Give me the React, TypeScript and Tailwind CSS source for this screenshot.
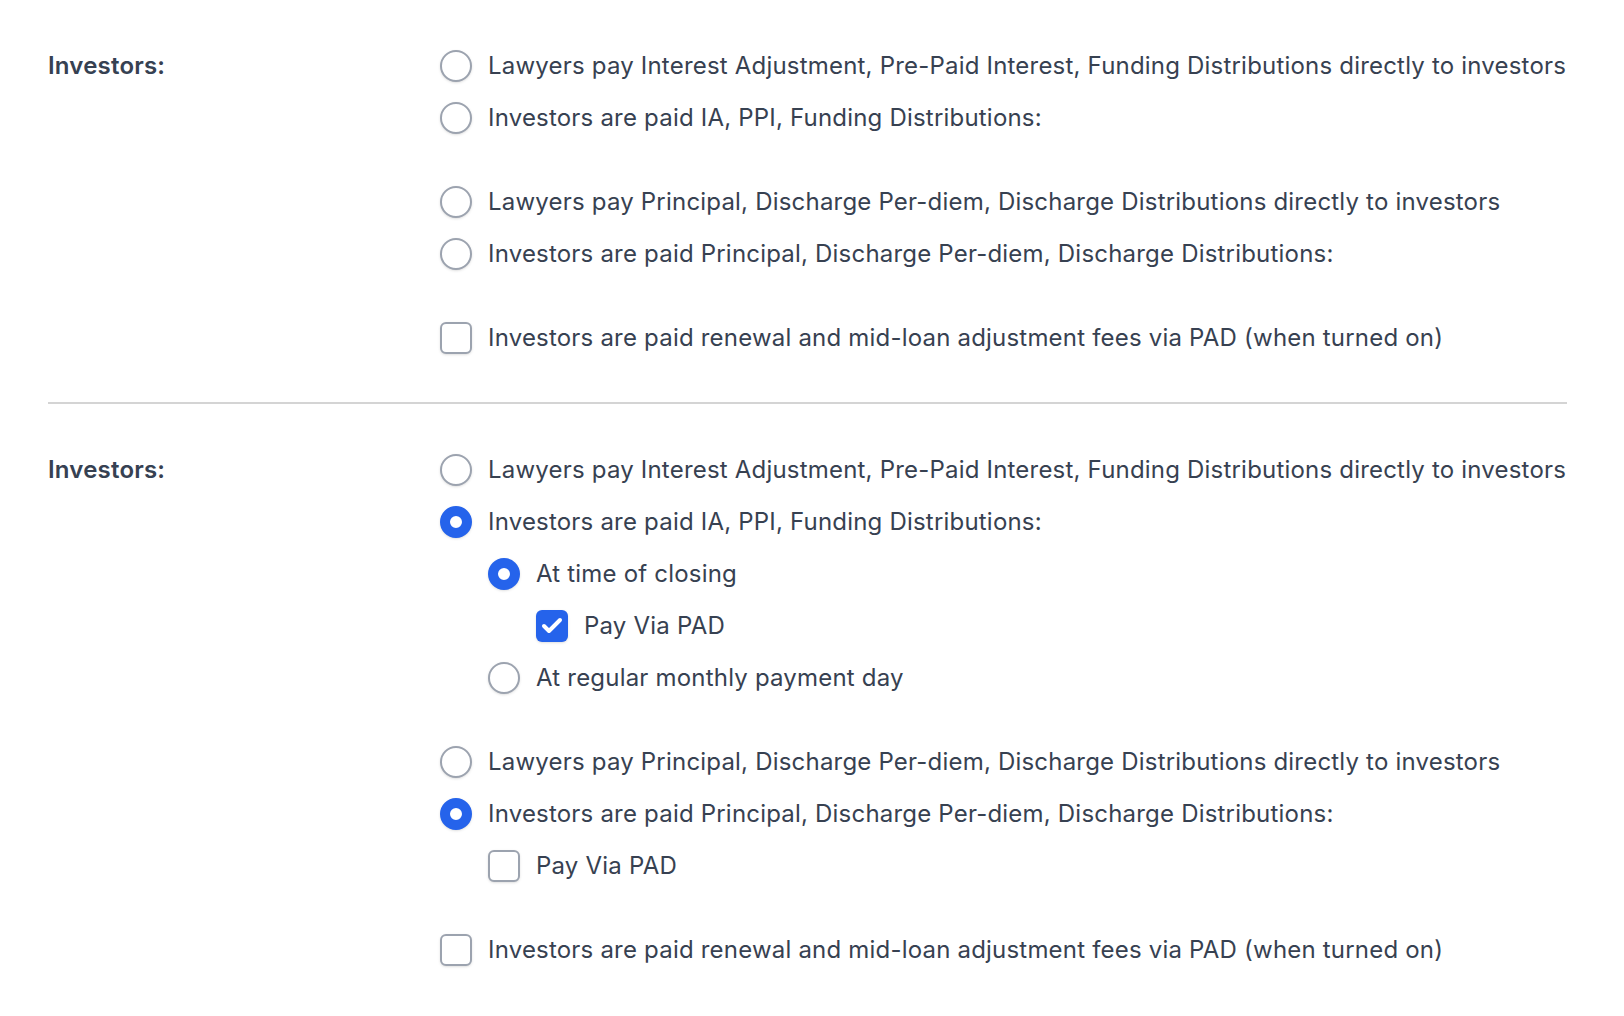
import { Check } from "lucide-react";

type Opt = {
  kind: "radio" | "checkbox";
  label: string;
  checked?: boolean;
  children?: Opt[];
};

type Section = { groups: Opt[][] };

const sections: Section[] = [
  {
    groups: [
      [
        { kind: "radio", label: "Lawyers pay Interest Adjustment, Pre-Paid Interest, Funding Distributions directly to investors" },
        { kind: "radio", label: "Investors are paid IA, PPI, Funding Distributions:" },
      ],
      [
        { kind: "radio", label: "Lawyers pay Principal, Discharge Per-diem, Discharge Distributions directly to investors" },
        { kind: "radio", label: "Investors are paid Principal, Discharge Per-diem, Discharge Distributions:" },
      ],
      [{ kind: "checkbox", label: "Investors are paid renewal and mid-loan adjustment fees via PAD (when turned on)" }],
    ],
  },
  {
    groups: [
      [
        { kind: "radio", label: "Lawyers pay Interest Adjustment, Pre-Paid Interest, Funding Distributions directly to investors" },
        {
          kind: "radio",
          label: "Investors are paid IA, PPI, Funding Distributions:",
          checked: true,
          children: [
            {
              kind: "radio",
              label: "At time of closing",
              checked: true,
              children: [{ kind: "checkbox", label: "Pay Via PAD", checked: true }],
            },
            { kind: "radio", label: "At regular monthly payment day" },
          ],
        },
      ],
      [
        { kind: "radio", label: "Lawyers pay Principal, Discharge Per-diem, Discharge Distributions directly to investors" },
        {
          kind: "radio",
          label: "Investors are paid Principal, Discharge Per-diem, Discharge Distributions:",
          checked: true,
          children: [{ kind: "checkbox", label: "Pay Via PAD" }],
        },
      ],
      [{ kind: "checkbox", label: "Investors are paid renewal and mid-loan adjustment fees via PAD (when turned on)" }],
    ],
  },
];

function Radio({ checked }: { checked?: boolean }) {
  if (checked) {
    return <span className="h-8 w-8 shrink-0 rounded-full border-[10px] border-[#2563eb] bg-white shadow-sm" />;
  }
  return <span className="h-8 w-8 shrink-0 rounded-full border-2 border-[#9ca3af] bg-white shadow-sm" />;
}

function Checkbox({ checked }: { checked?: boolean }) {
  if (checked) {
    return (
      <span className="flex h-8 w-8 shrink-0 items-center justify-center rounded-md bg-[#2563eb] shadow-sm">
        <Check size={24} strokeWidth={4} className="text-white" />
      </span>
    );
  }
  return <span className="h-8 w-8 shrink-0 rounded-md border-2 border-[#9ca3af] bg-white shadow-sm" />;
}

function OptionRow({ opt }: { opt: Opt }) {
  return (
    <>
      <label className="flex h-8 items-center gap-4">
        {opt.kind === "radio" ? <Radio checked={opt.checked} /> : <Checkbox checked={opt.checked} />}
        <span className="whitespace-nowrap text-[24px] leading-8 tracking-[0.2px] text-[#374151]">{opt.label}</span>
      </label>
      {opt.children && (
        <div className="flex flex-col gap-5 pl-12">
          {opt.children.map((c, i) => (
            <OptionRow key={i} opt={c} />
          ))}
        </div>
      )}
    </>
  );
}

export default function App() {
  return (
    <div className="min-h-screen bg-white pl-[48px] pr-[57px]" style={{ fontFamily: "Inter, 'Noto Sans', sans-serif" }}>
      {sections.map((s, si) => (
        <div key={si} className={si > 0 ? "border-t-2 border-[#d4d4d4] pt-[50px] pb-[44px]" : "pt-[50px] pb-[48px]"}>
          <div className="flex">
            <div className="w-[392px] shrink-0 text-[24px] font-semibold leading-8 tracking-[0.2px] text-[#364152]">Investors:</div>
            <div className="flex flex-col gap-[52px]">
              {s.groups.map((g, gi) => (
                <div key={gi} className="flex flex-col gap-5">
                  {g.map((o, oi) => (
                    <OptionRow key={oi} opt={o} />
                  ))}
                </div>
              ))}
            </div>
          </div>
        </div>
      ))}
    </div>
  );
}
